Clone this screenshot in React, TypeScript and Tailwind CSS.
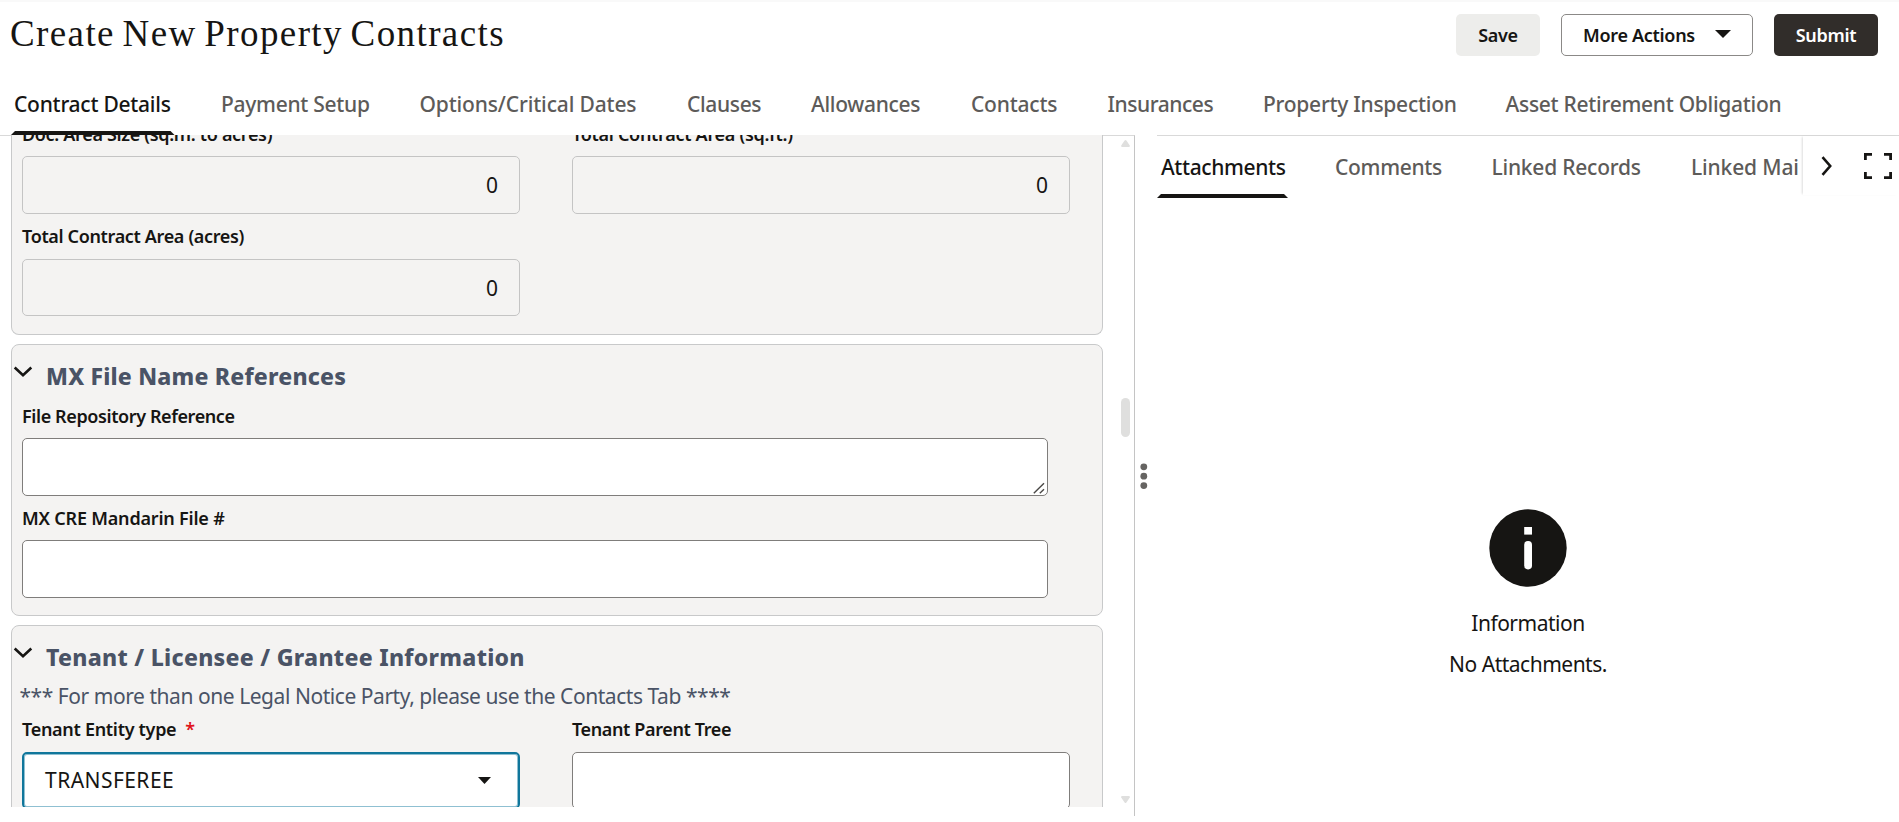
import React from "react";

type Tab = { label: string; width: string; track: string };

const mainTabs: Tab[] = [
  { label: "Payment Setup", width: "w-[148px]", track: "tracking-[-0.28px]" },
  { label: "Options/Critical Dates", width: "w-[217px]", track: "tracking-[-0.15px]" },
  { label: "Clauses", width: "w-[73.5px]", track: "tracking-[-0.35px]" },
  { label: "Allowances", width: "w-[109.5px]", track: "tracking-[-0.3px]" },
  { label: "Contacts", width: "w-[86px]", track: "tracking-[-0.22px]" },
  { label: "Insurances", width: "w-[105px]", track: "tracking-[-0.45px]" },
  { label: "Property Inspection", width: "w-[192px]", track: "tracking-[-0.26px]" },
  { label: "Asset Retirement Obligation", width: "w-[276px]", track: "tracking-[-0.28px]" },
];

const sideTabs: Tab[] = [
  { label: "Comments", width: "w-[106px]", track: "tracking-[-0.3px]" },
  { label: "Linked Records", width: "w-[149px]", track: "tracking-[-0.23px]" },
  { label: "Linked Mail", width: "w-[108px]", track: "tracking-[-0.15px]" },
];

function Underline({ className }: { className: string }) {
  return <div className={`h-1 bg-[#161513] [clip-path:polygon(4px_0,calc(100%-4px)_0,100%_100%,0_100%)] ${className}`} />;
}

function Label({ text, className, required }: { text: string; className: string; required?: boolean }) {
  return (
    <div className={`flex text-[18px] leading-6 font-semibold whitespace-nowrap ${className}`}>
      <span>{text}</span>
      {required && <span className="ml-[9px] tracking-normal text-[#e0131b]">*</span>}
    </div>
  );
}

function ReadOnly({ className }: { className: string }) {
  return (
    <div className={`flex w-[498px] items-center justify-end rounded-[5px] border border-[#c4c4c4] pt-[2px] pr-[21px] text-[21px] ${className}`}>
      0
    </div>
  );
}

function Heading({ text, track }: { text: string; track: string }) {
  return (
    <div className="mt-[15px] flex h-8">
      <svg width="20" height="12" viewBox="0 0 20 12" className="mt-[6px] ml-px" fill="none" stroke="#161513" strokeWidth="2.6">
        <path d="M1.7 1.5 10 9.2 18.3 1.5" />
      </svg>
      <h2 className={`ml-[13px] text-[23px] leading-8 font-extrabold whitespace-nowrap text-[#4a5366] ${track}`}>{text}</h2>
    </div>
  );
}

export default function App() {
  return (
    <div className="h-[822px] w-[1899px] overflow-hidden border-t-2 border-[#f9f9f9] bg-white font-['Noto_Sans','Open_Sans',sans-serif] text-[#161513]">
      <header className="flex h-[69px] items-start pr-[21px] pl-[10px]">
        <h1 className="mt-[8px] font-['Liberation_Serif',serif] text-[37px] leading-[48px] tracking-[1.4px] whitespace-nowrap [word-spacing:-3px]">
          Create New Property Contracts
        </h1>
        <div className="mt-3 ml-auto flex gap-[21px] text-[18px] leading-[42px] font-semibold tracking-[-0.3px] whitespace-nowrap">
          <button className="h-[42px] w-[84px] rounded-[5px] bg-[#ededeb]">Save</button>
          <button className="flex h-[42px] w-[192px] items-center rounded-[5px] border border-[#8b8987] pl-[21px]">
            <span className="w-[112px] text-left">More Actions</span>
            <svg width="16" height="8" viewBox="0 0 16 8" className="-mt-0.5 ml-[20px]">
              <path d="M0 0H16L8 8Z" fill="#161513" />
            </svg>
          </button>
          <button className="h-[42px] w-[104px] rounded-[5px] bg-[#312d2a] text-white">Submit</button>
        </div>
      </header>

      <nav className="flex h-[64px] text-[21px] leading-7 font-medium whitespace-nowrap">
        <div className="ml-[11px] flex w-[163px] flex-col">
          <span className="mt-[19px] ml-[3px] tracking-[-0.25px]">Contract Details</span>
          <Underline className="mt-auto w-[163.5px]" />
        </div>
        <div className="mt-[19px] ml-[47px] flex gap-[50.5px] text-[#5d5b59]">
          {mainTabs.map((t) => (
            <span key={t.label} className={`${t.width} ${t.track}`}>{t.label}</span>
          ))}
        </div>
      </nav>

      <div className="flex h-[687px]">
        <main className="h-[672px] w-[1103px] shrink-0 overflow-hidden">
          <div className="flex">
            <div className="h-px w-[11px] bg-[#d9d9d9]" />
            <div className="w-[1092px]">
              <section className="h-[200px] overflow-hidden rounded-b-[8px] border-x border-b border-[#c8c9ca] bg-[#f4f3f2] pl-[10px]">
                <div className="-mt-[13px] flex gap-[52px]">
                  <div>
                    <Label text="Doc. Area Size (sq.m. to acres)" className="h-[34px] tracking-[-0.33px]" />
                    <ReadOnly className="h-[58px]" />
                    <Label text="Total Contract Area (acres)" className="h-[45px] pt-[10px] tracking-[-0.35px]" />
                    <ReadOnly className="h-[57px]" />
                  </div>
                  <div>
                    <Label text="Total Contract Area (sq.ft.)" className="h-[34px] tracking-[-0.3px]" />
                    <ReadOnly className="h-[58px]" />
                  </div>
                </div>
              </section>

              <section className="mt-[9px] h-[272px] rounded-[8px] border border-[#c8c9ca] bg-[#f4f3f2]">
                <Heading text="MX File Name References" track="tracking-[0.2px]" />
                <div className="pl-[10px]">
                  <Label text="File Repository Reference" className="h-[46px] pt-[12px] tracking-[-0.4px]" />
                  <div className="flex h-[58px] w-[1026px] items-end justify-end rounded-[5px] border border-[#7f7d7b] bg-white pr-[2px] pb-[1px]">
                    <svg width="12" height="12" viewBox="0 0 12 12" fill="none" stroke="#4a4846" strokeWidth="1.4">
                      <path d="M.8 11.2 11 1.2M6.8 11.2 11 7.2" />
                    </svg>
                  </div>
                  <Label text="MX CRE Mandarin File #" className="h-[44px] pt-[10px] tracking-[-0.2px]" />
                  <div className="h-[58px] w-[1026px] rounded-[5px] border border-[#7f7d7b] bg-white" />
                </div>
              </section>

              <section className="mt-[9px] h-[272px] rounded-t-[8px] border border-[#c8c9ca] bg-[#f4f3f2]">
                <Heading text="Tenant / Licensee / Grantee Information" track="tracking-[0.28px]" />
                <p className="mt-[9px] h-[28px] pl-[7.5px] text-[21px] leading-7 tracking-[-0.45px] whitespace-nowrap text-[#4a5366]">
                  *** For more than one Legal Notice Party, please use the Contacts Tab ****
                </p>
                <div className="flex gap-[52px] pl-[10px]">
                  <div className="w-[498px]">
                    <Label text="Tenant Entity type" required className="h-[42px] pt-[7px] tracking-[-0.3px]" />
                    <div className="flex h-[57px] items-center rounded-[5px] border-2 border-[#10769b] bg-white pr-[27px] pl-[21px] text-[21px] tracking-[0.45px] shadow-[inset_0_0_0_1px_#8fc0d2]">
                      TRANSFEREE
                      <svg width="13" height="7" viewBox="0 0 13 7" className="ml-auto">
                        <path d="M0 0H13L6.5 7Z" fill="#161513" />
                      </svg>
                    </div>
                  </div>
                  <div className="w-[498px]">
                    <Label text="Tenant Parent Tree" className="h-[42px] pt-[7px] tracking-[-0.38px]" />
                    <div className="h-[57px] rounded-[5px] border border-[#7f7d7b] bg-white" />
                  </div>
                </div>
              </section>
            </div>
          </div>
        </main>

        <div className="flex h-[681px] w-[32px] shrink-0 flex-col items-end border-t border-r border-t-[#d9d9d9] border-r-[#c4c4c4] pr-1">
          <svg width="9" height="7" viewBox="0 0 9 7" className="mt-1 shrink-0">
            <path d="M3.6.6Q4.5-.4 5.4.6L8.8 5.6Q9 7 8 7H1Q0 7 .2 5.6Z" fill="#dfdfde" />
          </svg>
          <div className="mt-[251px] h-[39px] w-[9px] shrink-0 rounded-full bg-[#dfdfde]" />
          <svg width="9" height="7" viewBox="0 0 9 7" className="mt-[359px] shrink-0">
            <path d="M3.6 6.4Q4.5 7.4 5.4 6.4L8.8 1.4Q9 0 8 0H1Q0 0 .2 1.4Z" fill="#dfdfde" />
          </svg>
        </div>

        <div className="w-[22px] shrink-0 pt-[328px] pl-[5px]">
          <svg width="8" height="27" viewBox="0 0 8 27" fill="#666462">
            <circle cx="3.8" cy="3.8" r="3.4" />
            <circle cx="3.8" cy="13.2" r="3.4" />
            <circle cx="3.8" cy="22.6" r="3.4" />
          </svg>
        </div>

        <aside className="w-[742px] border-t border-[#d9d9d9]">
          <div className="flex h-[62px] text-[21px] leading-7 whitespace-nowrap">
            <div className="flex w-[641px] overflow-hidden">
              <div className="flex w-[131px] shrink-0 flex-col font-medium">
                <span className="mt-[17px] ml-1 tracking-[-0.38px]">Attachments</span>
                <Underline className="mt-auto w-[131px]" />
              </div>
              <div className="mt-[17px] ml-[47px] flex gap-[50.5px] font-medium text-[#5d5b59]">
                {sideTabs.map((t) => (
                  <span key={t.label} className={`${t.width} ${t.track}`}>{t.label}</span>
                ))}
              </div>
            </div>
            <div className="ml-[5px] flex h-[59px] w-[96px] bg-white [box-shadow:-2px_0_2px_-1px_#00000022]">
              <svg width="12" height="20" viewBox="0 0 12 20" className="mt-5 ml-[18px]" fill="none" stroke="#161513" strokeWidth="2.6">
                <path d="M1.5 1.2 9.2 10 1.5 18.8" />
              </svg>
              <svg width="28" height="28" viewBox="0 0 28 28" className="mt-4 ml-[31px]" fill="none" stroke="#161513" strokeWidth="2.8">
                <path d="M1.4 8V2.4H8M20 2.4H26.6V8M26.6 20V25.6H20M8 25.6H1.4V20" />
              </svg>
            </div>
          </div>
          <div className="mt-[311px] flex flex-col items-center text-[21px] leading-7 tracking-[-0.5px]">
            <svg width="78" height="78" viewBox="0 0 78 78">
              <circle cx="39" cy="39" r="38.7" fill="#161513" />
              <rect x="35.2" y="18" width="7.8" height="7.6" fill="#fff" />
              <rect x="35.2" y="32" width="7.8" height="28.4" rx="3.8" fill="#fff" />
            </svg>
            <p className="mt-[22px]">Information</p>
            <p className="mt-[13px]">No Attachments.</p>
          </div>
        </aside>
      </div>
    </div>
  );
}
